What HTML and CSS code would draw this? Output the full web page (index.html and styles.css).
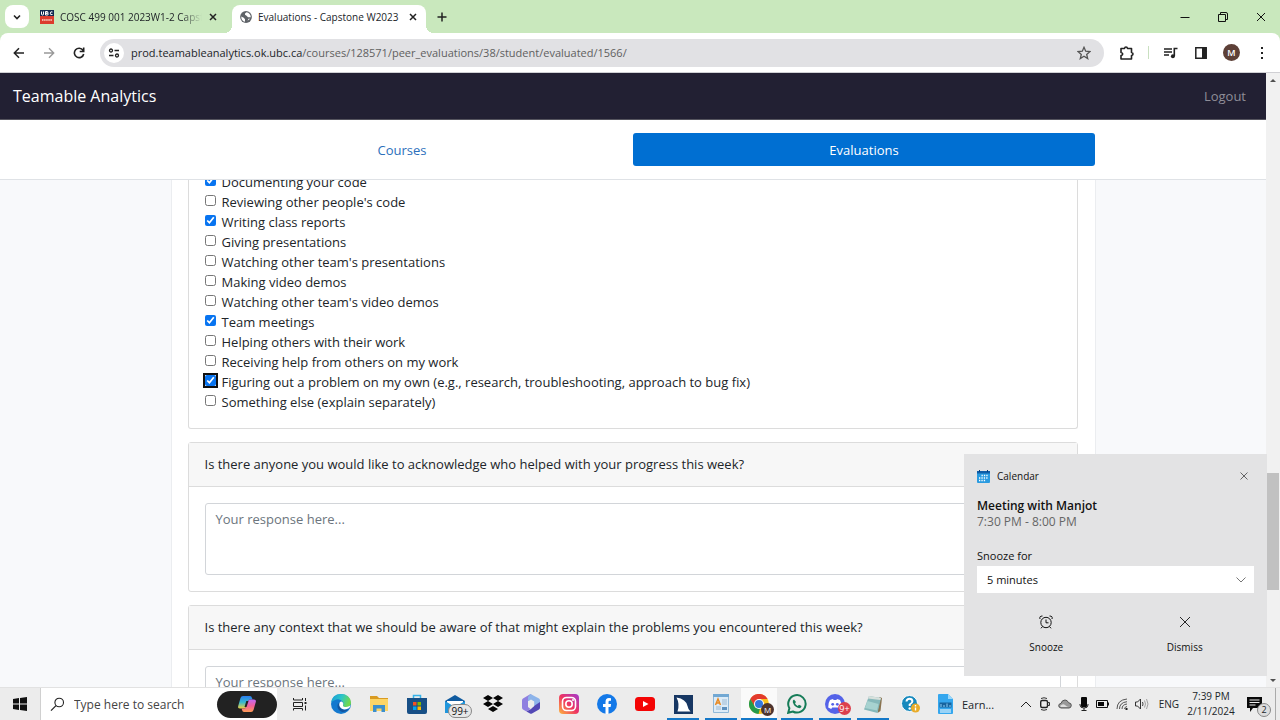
FILE: index.html
```html
<!DOCTYPE html>
<html lang="en">
<head>
<meta charset="utf-8">
<title>Evaluations - Capstone W2023</title>
<link rel="stylesheet" href="styles.css">
</head>
<body>
<div class="tabstrip">
  <button class="tab-search" aria-label="Search tabs"><svg width="10" height="10" viewBox="0 0 10 10"><path d="M2 3.5l3 3 3-3" fill="none" stroke="#222" stroke-width="1.6"/></svg></button>
  <div class="tab">
    <svg width="14" height="14" viewBox="0 0 14 14"><path d="M0 0h14v7H0z" fill="#10284f"/><path d="M0 6h14v8H0z" fill="#dc3b2d"/><path d="M1.5 1.500v2.500q0 1 1 1t1-1V1.500M5.500 5V1.500h1.500q1 0 1 .8t-1 .9H5.500h1.700q1.200 0 1.200.9T7 5zM12.500 2q-2-1-2.200 1.200T12.500 4.500" fill="none" stroke="#fff"/><path d="M2 10h10" stroke="#f2b0a5" stroke-width="2" stroke-dasharray="1.500 .6"/></svg>
    <span class="tab-title fade">COSC 499 001 2023W1-2 Capst</span>
    <button class="tab-close" aria-label="Close tab"><svg width="8" height="8" viewBox="0 0 8 8"><path d="M1 1l6 6M7 1L1 7" stroke="#222" stroke-width="1.5"/></svg></button>
  </div>
  <div class="tab active">
    <svg width="12" height="12" viewBox="0 0 12 12"><circle cx="6" cy="6" r="5.900" fill="#5f6368"/><path d="M1.200 5.500l2.600 1.200 1.200 1.600v2.500Q1.300 10 1.200 5.500zM6.500 1.200L5 2.500v1.300l1.500.9 1.500 1.500h2.800Q10.500 2 6.500 1.200zM7.500 9.800l1-2h1.700z" fill="#fff"/></svg>
    <span class="tab-title">Evaluations - Capstone W2023</span>
    <button class="tab-close" aria-label="Close tab"><svg width="8" height="8" viewBox="0 0 8 8"><path d="M1 1l6 6M7 1L1 7" stroke="#222" stroke-width="1.5"/></svg></button>
  </div>
  <button class="new-tab" aria-label="New tab"><svg width="10" height="10" viewBox="0 0 10 10"><path d="M5 .5v9M.5 5h9" stroke="#222" stroke-width="1.5"/></svg></button>
  <div class="window-buttons">
    <button aria-label="Minimize"><svg width="10" height="10" viewBox="0 0 10 10"><path d="M.5 5.500h9" stroke="#111"/></svg></button>
    <button aria-label="Restore"><svg width="10" height="10" viewBox="0 0 10 10"><path d="M.5 2.500h7v7h-7zM2.500 2V.5h5.500q1.500 0 1.500 1.500v5.500H8" fill="none" stroke="#111"/></svg></button>
    <button aria-label="Close"><svg width="10" height="10" viewBox="0 0 10 10"><path d="M1 1l8 8M9 1L1 9" stroke="#111"/></svg></button>
  </div>
</div>
<div class="toolbar">
  <button class="tool" aria-label="Back"><svg width="12" height="12" viewBox="0 0 12 12"><path d="M11 6H1.500M6 1.200L1.300 6 6 10.800" fill="none" stroke="#222" stroke-width="1.5"/></svg></button>
  <button class="tool" aria-label="Forward"><svg width="12" height="12" viewBox="0 0 12 12"><path d="M1 6h9.500M6 1.200L10.700 6 6 10.800" fill="none" stroke="#999" stroke-width="1.4"/></svg></button>
  <button class="tool" aria-label="Reload"><svg width="12" height="12" viewBox="0 0 12 12"><path d="M10 3.300A4.700 4.700 0 1 0 10.700 7M10.700.5v4h-4" fill="none" stroke="#222" stroke-width="1.600"/></svg></button>
  <div class="omnibox">
    <button class="site-info" aria-label="Site information"><svg width="12" height="10" viewBox="0 0 12 10"><path d="M6.500 2.500H11M1 7.500h4.500" stroke="#222" stroke-width="1.4"/><circle cx="3" cy="2.500" r="1.500" fill="none" stroke="#222" stroke-width="1.300"/><circle cx="9" cy="7.500" r="1.500" fill="none" stroke="#222" stroke-width="1.300"/></svg></button>
    <div class="url">prod.teamableanalytics.ok.ubc.ca<span>/courses/128571/peer_evaluations/38/student/evaluated/1566/</span></div>
    <button class="star" aria-label="Bookmark"><svg width="14" height="14" viewBox="0 0 14 14"><path d="M7 1.300l1.700 3.900 4.200.4-3.200 2.800 1 4.200L7 10.300l-3.700 2.300 1-4.200L1.100 5.600l4.200-.4z" fill="none" stroke="#555" stroke-width="1.300"/></svg></button>
  </div>
  <button class="tool ext" aria-label="Extensions"><svg width="14" height="14" viewBox="0 0 14 14"><path d="M1 2.500h3.500q.2-1.500 1.500-1.500t1.500 1.500h4v4q1.500.2 1.500 1.500t-1.500 1.500v3.500H1V9.500q1.700-.2 1.700-1.500T1 6.500z" fill="none" stroke="#222" stroke-width="1.600" stroke-linejoin="round"/></svg></button>
  <span class="divider"></span>
  <button class="tool" aria-label="Media"><svg width="14" height="12" viewBox="0 0 14 12"><path d="M0 2h8M0 5h8M0 8h5" stroke="#222" stroke-width="1.500"/><path d="M10.300 9V1.500h3.200" fill="none" stroke="#222" stroke-width="1.600"/><circle cx="8.900" cy="9.200" r="2" fill="#222"/></svg></button>
  <button class="tool" aria-label="Side panel"><svg width="12" height="12" viewBox="0 0 12 12"><path d="M.8.800h10.400v10.400H.8z" fill="none" stroke="#222" stroke-width="1.500"/><path d="M7 1h4.500v10H7z" fill="#222"/></svg></button>
  <button class="avatar" aria-label="Profile">M</button>
  <button class="kebab" aria-label="Menu"><svg width="4" height="12" viewBox="0 0 4 12"><path d="M1 0h2v2H1zM1 5h2v2H1zM1 10h2v2H1z" fill="#222"/></svg></button>
</div>

<div class="viewport">
  <div class="page">
    <header class="navbar"><a href="#" class="brand">Teamable Analytics</a><a href="#" class="logout">Logout</a></header>
    <div class="subnav"><nav class="pills"><a href="#">Courses</a><a href="#" class="current">Evaluations</a></nav></div>
    <main class="scroll">
      <form class="panel">
        <section class="card options">
          <label><input type="checkbox" checked><span>Documenting your code</span></label>
          <label><input type="checkbox"><span>Reviewing other people's code</span></label>
          <label><input type="checkbox" checked><span>Writing class reports</span></label>
          <label><input type="checkbox"><span>Giving presentations</span></label>
          <label><input type="checkbox"><span>Watching other team's presentations</span></label>
          <label><input type="checkbox"><span>Making video demos</span></label>
          <label><input type="checkbox"><span>Watching other team's video demos</span></label>
          <label><input type="checkbox" checked><span>Team meetings</span></label>
          <label><input type="checkbox"><span>Helping others with their work</span></label>
          <label><input type="checkbox"><span>Receiving help from others on my work</span></label>
          <label><input type="checkbox" checked class="focused"><span>Figuring out a problem on my own (e.g., research, troubleshooting, approach to bug fix)</span></label>
          <label><input type="checkbox"><span>Something else (explain separately)</span></label>
        </section>
        <section class="card">
          <label class="question" for="q1">Is there anyone you would like to acknowledge who helped with your progress this week?</label>
          <div class="answer"><textarea id="q1" placeholder="Your response here..."></textarea></div>
        </section>
        <section class="card">
          <label class="question" for="q2">Is there any context that we should be aware of that might explain the problems you encountered this week?</label>
          <div class="answer"><textarea id="q2" placeholder="Your response here..."></textarea></div>
        </section>
      </form>
    </main>
  </div>
  <div class="scrollbar">
    <svg width="8" height="5" viewBox="0 0 8 5"><path d="M1 4l3-3 3 3z" fill="#505050"/></svg>
    <div class="track"><div class="thumb"></div></div>
    <svg width="8" height="5" viewBox="0 0 8 5"><path d="M1 1l3 3 3-3z" fill="#505050"/></svg>
  </div>
  <aside class="toast">
    <div class="toast-head">
      <svg width="13" height="13" viewBox="0 0 13 13"><rect y="1" width="13" height="12" rx="1" fill="#2a9be0"/><path d="M0 1h13v2.500H0z" fill="#0f5ea8"/><path d="M2.500 0v2M10.500 0v2" stroke="#0a3f78"/><path d="M4.500 5.500h7M2 8h9.500M2 10.500h7" stroke="#fff" stroke-width="1.300" stroke-dasharray="1.300 1.100"/></svg>
      <span>Calendar</span>
      <button aria-label="Close"><svg width="8" height="8" viewBox="0 0 8 8"><path d="M.5.500l7 7M7.500.500l-7 7" stroke="#555" stroke-width=".9"/></svg></button>
    </div>
    <h2>Meeting with Manjot</h2>
    <p>7:30 PM - 8:00 PM</p>
    <label for="snooze">Snooze for</label>
    <div class="select-wrap">
      <select id="snooze"><option>5 minutes</option></select>
      <svg width="10" height="6" viewBox="0 0 10 6"><path d="M.5.500L5 5 9.500.500" fill="none" stroke="#666" stroke-width=".9"/></svg>
    </div>
    <div class="actions">
      <button><svg width="14" height="14" viewBox="0 0 14 14"><circle cx="7" cy="7.500" r="5.200" fill="none" stroke="#111"/><path d="M7 4.500v3.300h2.500M1 4Q0 1 3.500 1M13 4q1-3-2.500-3M3.500 11.500L2 13.300M10.500 11.500l1.500 1.800" fill="none" stroke="#111"/></svg><span>Snooze</span></button>
      <button><svg width="14" height="14" viewBox="0 0 14 14"><path d="M2 2l10 10M12 2L2 12" stroke="#111" stroke-width=".9"/></svg><span>Dismiss</span></button>
    </div>
  </aside>
</div>

<footer class="taskbar">
  <button class="start" aria-label="Start"><svg width="14" height="14" viewBox="0 0 14 14"><path d="M0 2l6-.9v5.500H0zM7 .9L14 0v6.600H7zM0 7.400h6v5.500L0 12zM7 7.400h7V14l-7-.9z" fill="#111"/></svg></button>
  <div class="search">
    <svg width="15" height="15" viewBox="0 0 15 15"><circle cx="9.200" cy="5.500" r="4.300" fill="none" stroke="#222" stroke-width="1.100"/><path d="M6 8.700L1 13.700" stroke="#222" stroke-width="1.200"/></svg>
    <input type="text" aria-label="Search" placeholder="Type here to search">
    <button class="copilot" aria-label="Copilot"><svg width="20" height="18" viewBox="0 0 20 18"><defs><linearGradient id="ca" x2="0" y2="1"><stop stop-color="#2b7df0"/><stop offset=".5" stop-color="#35b8d0"/><stop offset="1" stop-color="#f3d13c"/></linearGradient><linearGradient id="cb" x2="0" y2="1"><stop stop-color="#c06af5"/><stop offset=".5" stop-color="#f25f9c"/><stop offset="1" stop-color="#ff9d55"/></linearGradient></defs><path d="M6 1h7q1.500 0 2 2l.5 1.500h-2.500q-1.500 0-2 1.500l-2 6q-.5 1.500-2 1.500H3q-2.500 0-1.800-2.500L3.500 3Q4 1 6 1z" fill="url(#ca)"/><path d="M14 17H7q-1.500 0-2-2l-.3-1.500H7q1.500 0 2-1.500l2-6q.5-1.500 2-1.500h4q2.500 0 1.800 2.500l-2.300 8q-.5 2-2.500 2z" fill="url(#cb)"/><path d="M9.300 6h2.200l-2 6H7.500z" fill="#222"/></svg></button>
  </div>
  <div class="apps">
    <button class="task-view" aria-label="Task view"><svg width="14" height="14" viewBox="0 0 14 14"><path d="M.5 1v2h9V1M.5 5.500h9v4h-9zM.5 13.500v-2h9v2M12.500 1v3M12.500 8.500v5" fill="none" stroke="#222"/><path d="M11.500 5h2v2h-2z" fill="#222"/></svg></button>
    <button aria-label="Edge"><svg width="20" height="20" viewBox="0 0 20 20"><defs><linearGradient id="ea" x2="1" y2=".3"><stop stop-color="#1798d8"/><stop offset=".55" stop-color="#2cc5c8"/><stop offset="1" stop-color="#6fd94f"/></linearGradient></defs><circle cx="10" cy="10" r="10" fill="#1479cf"/><path d="M0 9Q1 0 10 0q9 0 10 8.500 0 4.500-5 4.500-3.500 0-3-1.800 1.200-1.500 0-3.200Q9 4 4 6 1 7 0 9z" fill="url(#ea)"/><path d="M7 9.500q-2 5 3 8 4 2 8-2.500-2.500 1.300-5.500.5Q8 14 8.500 9.500z" fill="#1456a0"/><path d="M8.700 8.500q-1.500 3.500 1.800 6 3.500 2 7.700-.5l1.300-2.500q-3 2-6.500 1.200-1.500-.7-1-1.500 1-1.500-.5-3.200-1.500-1.200-2.800.5z" fill="#fff"/></svg></button>
    <button aria-label="File Explorer"><svg width="20" height="18" viewBox="0 0 20 18"><path d="M1 1h7l2 2h9v4H1z" fill="#d99b22"/><path d="M1 4h18v12H1z" fill="#fcd566"/><path d="M4 17v-7h12v7h-3.500v-3.500h-5V17z" fill="#3c8fcc"/></svg></button>
    <button aria-label="Store"><svg width="20" height="20" viewBox="0 0 20 20"><path d="M6.500 5V1.500h7V5" fill="none" stroke="#36b3ea" stroke-width="1.500"/><path d="M0 4h20v14q0 2-2 2H2q-2 0-2-2z" fill="#174f86"/><path d="M6 8h3.500v3.500H6z" fill="#f25022"/><path d="M10.500 8H14v3.500h-3.500z" fill="#7fba00"/><path d="M6 12.500h3.500V16H6z" fill="#00a4ef"/><path d="M10.500 12.500H14V16h-3.500z" fill="#ffb900"/></svg></button>
    <button class="badged" aria-label="Mail"><svg width="20" height="18" viewBox="0 0 20 18"><path d="M0 6l10-6 10 6v12H0z" fill="#0f5a9f"/><path d="M2 6h16v7H2z" fill="#fff"/><path d="M0 6l10 6 10-6v12H0z" fill="#2196dc"/></svg><span class="badge count">99+</span></button>
    <button aria-label="Dropbox"><svg width="20" height="18" viewBox="0 0 20 18"><path d="M5 0l5 3-5 3-5-3zM15 0l5 3-5 3-5-3zM5 6l5 3-5 3-5-3zM15 6l5 3-5 3-5-3zM10 11l5 3-5 3-5-3z" fill="#050505"/></svg></button>
    <button aria-label="Microsoft 365"><svg width="18" height="20" viewBox="0 0 18 20"><path d="M8.500 0L1 4.500Q0 5 0 6.500v7Q0 15 1 15.500l3.500 2 4-2.500-2.500-2V7l6-4z" fill="#8f7fe0"/><path d="M8.500 0l8.500 4.500q1 .5 1 2v7l-6 1.500V7.500L6 7V3z" fill="#8db4ea"/><path d="M4.500 17.500L8 19.500q1 .5 2 0l7-4q1-.5 1-2V8l-6 4-3 3z" fill="#5348b5"/><path d="M6 7.500l3-2 3.200 2v4.500L9 14l-3-2z" fill="#ececec"/></svg></button>
    <button aria-label="Instagram"><svg width="20" height="20" viewBox="0 0 20 20"><defs><linearGradient id="ig" x1="0" y1="1" x2="1" y2="0"><stop stop-color="#fdb73e"/><stop offset=".5" stop-color="#ee3363"/><stop offset="1" stop-color="#a13bd0"/></linearGradient></defs><rect width="20" height="20" rx="4" fill="url(#ig)"/><rect x="3.500" y="3.500" width="13" height="13" rx="4" fill="none" stroke="#fff" stroke-width="1.600"/><circle cx="10" cy="10" r="3.200" fill="none" stroke="#fff" stroke-width="1.600"/><circle cx="14" cy="6" r="1" fill="#fff"/></svg></button>
    <button aria-label="Facebook"><svg width="20" height="20" viewBox="0 0 20 20"><circle cx="10" cy="10" r="10" fill="#1479e8"/><path d="M8.500 20v-7H6v-3h2.500V8q0-4 3.500-4l2 .2v2.600h-1.200Q11.500 6.800 11.500 8v2h2.600l-.5 3h-2.100v7z" fill="#fff"/></svg></button>
    <button aria-label="YouTube"><svg width="20" height="14" viewBox="0 0 20 14"><rect width="20" height="14" rx="3.500" fill="#f40505"/><path d="M8 4l5.500 3L8 10z" fill="#fff"/></svg></button>
    <button class="open" aria-label="Wireshark"><svg width="19" height="19" viewBox="0 0 19 19"><path d="M0 0h19v19H0z" fill="#173763"/><path d="M2.500 2.500Q12 4 13.500 11q.8 4 3 5.500h-13Q6 9 2.500 2.500z" fill="#fff"/></svg></button>
    <button class="open" aria-label="WordPad"><svg width="16" height="20" viewBox="0 0 16 20"><path d="M.5.500h15v18H.5z" fill="#dcebf7" stroke="#8fb8d8"/><path d="M0 0h16v3H0z" fill="#72a8d3"/><path d="M2.500 11L5 5l2.500 6M3.500 9h3" fill="none" stroke="#e88921" stroke-width="1.500"/><path d="M9 6h5M9 8h5M9 10h5M3 13h5M3 15h5" stroke="#9db9d2"/><path d="M9 13h5v3H9z" fill="#5d90be"/></svg></button>
    <button class="open active badged" aria-label="Chrome"><svg width="20" height="20" viewBox="0 0 20 20"><circle cx="10" cy="10" r="10" fill="#fbc11b"/><path d="M1.300 5A10 10 0 0 1 18.700 5H10l-4.500 7.500z" fill="#e33b2e"/><path d="M1.300 5l4.500 7.500 5.200 2L9.500 20A10 10 0 0 1 1.300 5z" fill="#259b4b"/><circle cx="10" cy="10" r="5" fill="#fff"/><circle cx="10" cy="10" r="4" fill="#3477de"/></svg><span class="badge profile">M</span></button>
    <button class="open" aria-label="WhatsApp"><svg width="20" height="20" viewBox="0 0 20 20"><path d="M1.200 18.800l1.200-4.600A8.700 8.700 0 1 1 5.800 17.500z" fill="none" stroke="#167c58" stroke-width="2"/><path d="M7 5.500q-1.500.7-1.200 2.700 1.500 5 6.700 6 2-.2 2-2.200l-2.500-1.300-1.300 1.300Q8.500 11 8 9.200l1-1.200z" fill="#167c58"/></svg></button>
    <button class="open badged" aria-label="Discord"><svg width="20" height="20" viewBox="0 0 20 20"><circle cx="10" cy="10" r="10" fill="#5563e8"/><path d="M5 6l3-1 .6.900h2.800L12 5l3 1q2.300 4 1.800 7.500l-3 1.500-1-1.500H7.200l-1 1.500-3-1.500Q3 9 5 6z" fill="#fff"/><circle cx="7.700" cy="10.300" r="1.400" fill="#5563e8"/><circle cx="12.300" cy="10.300" r="1.400" fill="#5563e8"/></svg><span class="badge alert">9+</span></button>
    <button class="open" aria-label="Notepad"><svg width="20" height="18" viewBox="0 0 20 18"><path d="M16.500 2l2.500 1-1.500 13-3 2z" fill="#8a7350"/><path d="M6 1l12 2-3.500 15L1 14.500z" fill="#86b8ba"/><path d="M6 1l12 2-.7 2L5 3.500z" fill="#d8e0dc"/><path d="M4.500 6l11 3-1.500 6.500L2 13z" fill="#a7d2d0"/></svg></button>
    <button aria-label="Help"><svg width="20" height="18" viewBox="0 0 20 18"><circle cx="8.500" cy="8.500" r="8" fill="#1789bd" stroke="#fff"/><path d="M5.500 6.500Q5.800 3.700 8.500 3.700t2.900 2.500Q11.400 8 8.700 9.500V11" fill="none" stroke="#fff" stroke-width="2"/><circle cx="8.700" cy="13.500" r="1.200" fill="#fff"/><circle cx="14.500" cy="13" r="4.500" fill="#e9ac29"/><path d="M14.500 10v1.500M14.500 12.500v3" stroke="#fff" stroke-width="1.400"/></svg></button>
  </div>
  <button class="news"><svg width="15" height="20" viewBox="0 0 15 20"><path d="M0 1q0-1 1-1h9l5 5v14q0 1-1 1H1q-1 0-1-1z" fill="#35a7ee"/><path d="M10 0v5h5z" fill="#9bd7fa"/><path d="M1.500 8.500h12v5h-12z" fill="#17639e"/><path d="M3 13v-3M6 13v-2M9 13V9.500M12 13v-2" stroke="#8ed2f8"/><path d="M2 16h11M2 18h11" stroke="#fff"/></svg><span>Earn...</span></button>
  <div class="tray">
    <svg width="12" height="8" viewBox="0 0 12 8"><path d="M1 7l5-5 5 5" fill="none" stroke="#222"/></svg>
    <svg width="12" height="14" viewBox="0 0 12 14"><rect x="1.700" y="3.500" width="6.800" height="7" rx="1.500" fill="none" stroke="#222" stroke-width="1.400"/><path d="M2 1.500Q5 0 8 1.500M2 12.500q3 1.500 6 0M8.500 5.500h2v3h-2" fill="none" stroke="#333"/></svg>
    <svg width="14" height="10" viewBox="0 0 14 10"><path d="M3 9Q.5 8.500.7 6.500 1 4.500 3 4.400 4 1 7 1q2.500 0 3.500 2.700Q13.500 4 13.300 6.500 13 9 11 9z" fill="#999" stroke="#555"/><path d="M2 7q3-3 5-1t4 2H3z" fill="#ddd"/></svg>
    <svg width="10" height="14" viewBox="0 0 10 14"><rect x="2" width="6" height="10" rx="1" fill="#080808"/><path d="M1 7v1q0 3 4 3t4-3V7M5 11v2.500M2.500 13.500h5" fill="none" stroke="#222"/></svg>
    <svg width="13" height="8" viewBox="0 0 13 8"><path d="M.5.500h11v7H.5z" fill="none" stroke="#111"/><path d="M2 2h6v4H2z" fill="#080808"/><path d="M12.500 2.500v3" stroke="#111"/></svg>
    <svg width="12" height="12" viewBox="0 0 12 12"><path d="M1 11Q1 2 11 1M3.500 11Q3.500 4.500 11 3.700M6 11q0-4.500 5-5M8.500 11q0-2 2.500-2.500" fill="none" stroke="#555"/><path d="M9.500 10h2v2h-2z" fill="#222"/></svg>
    <svg width="14" height="12" viewBox="0 0 14 12"><path d="M.5 4v4h2l3 3V1l-3 3z" fill="none" stroke="#333"/><path d="M7.500 4q1 2 0 4" fill="none" stroke="#444"/><path d="M9.500 2.500q2 3.500 0 7M11.500 1q3 5 0 10" fill="none" stroke="#999" stroke-width=".9"/></svg>
    <span class="lang">ENG</span>
    <div class="clock"><span>7:39 PM</span><span>2/11/2024</span></div>
    <button class="notices badged" aria-label="Notifications"><svg width="15" height="15" viewBox="0 0 15 15"><path d="M0 0h15v11H6l-3 4v-4H0z" fill="#090909"/><path d="M2.500 3h10M2.500 5.500h10M2.500 8h6" stroke="#ececec"/></svg><span class="badge number">2</span></button>
  </div>
</footer>
</body>
</html>
```
FILE: styles.css
```css
* { box-sizing: border-box; }
body {
  margin: 0;
  height: 100vh;
  display: flex;
  flex-direction: column;
  overflow: hidden;
  background: #c9e8bd;
  color: #212529;
  font-family: "Open Sans", "Noto Sans", sans-serif;
  font-size: 13px;
}
button { border: 0; padding: 0; background: none; font: inherit; color: inherit; display: flex; align-items: center; justify-content: center; flex: none; }
a { text-decoration: none; color: inherit; }
svg { display: block; flex: none; }

.tabstrip { height: 33px; flex: none; display: flex; align-items: center; padding-left: 5px; background: #c9e8bd; font-size: 10px; }
.tab-search { width: 24px; height: 23px; border-radius: 8px; background: #fff; }
.tab { width: 199px; height: 28px; align-self: flex-end; display: flex; align-items: center; gap: 6px; padding: 0 10px 4px 11px; }
.tab.active { background: #fff; border-radius: 8px 8px 0 0; padding: 0 8px 4px; width: 194px; margin-left: 4px; position: relative; }
.tab.active::before, .tab.active::after { content: ""; position: absolute; bottom: 0; width: 8px; height: 8px; }
.tab.active::before { left: -8px; background: radial-gradient(circle at 0 0, transparent 8px, #fff 8px); }
.tab.active::after { right: -8px; background: radial-gradient(circle at 100% 0, transparent 8px, #fff 8px); }
.tab-title { flex: 1; min-width: 0; white-space: nowrap; }
.tab-title.fade { mask-image: linear-gradient(90deg, #000 85%, transparent); }
.tab-close { width: 10px; height: 20px; }
.new-tab { width: 30px; height: 24px; margin-left: 1px; }
.window-buttons { margin-left: auto; display: flex; }
.window-buttons button { width: 38px; height: 30px; }

.toolbar { height: 40px; flex: none; display: flex; align-items: center; padding: 0 10px 0 4px; background: #fff; border-bottom: 1px solid #d0d0d4; border-radius: 8px 8px 0 0; }
.tool { width: 30px; height: 28px; }
.omnibox { flex: 1; height: 28px; margin-left: 6px; display: flex; align-items: center; gap: 7px; padding: 0 13px 0 4px; border-radius: 14px; background: #e1e1e4; white-space: nowrap; overflow: hidden; }
.site-info { width: 20px; height: 20px; border-radius: 50%; background: #fff; }
.url { flex: 1; font-size: 11px; }
.url span { color: #606060; }
.ext { margin-left: 8px; }
.divider { width: 1px; height: 13px; margin: 0 7px 0 6px; background: #c9e0c0; }
.avatar { width: 17px; height: 17px; margin: 0 7px; border-radius: 50%; background: #5d4037; color: #fff; font-size: 9px; font-weight: 600; }
.kebab { width: 16px; height: 24px; margin-left: 7px; }

.viewport { flex: 1; min-height: 0; display: flex; position: relative; background: #f8f9fb; }
.page { flex: 1; min-width: 0; display: flex; flex-direction: column; }
.navbar { height: 47px; flex: none; display: flex; justify-content: space-between; align-items: center; padding: 0 20px 0 13px; background: #222033; border-bottom: 1px solid #55545e; }
.brand { color: #fff; font-size: 16px; }
.logout { color: #8f8e98; }
.subnav { height: 60px; flex: none; display: flex; justify-content: center; align-items: center; background: #fff; border-bottom: 1px solid #dfe2e6; }
.pills { width: 924px; display: flex; }
.pills a { flex: 1; height: 33px; display: flex; align-items: center; justify-content: center; border-radius: 3px; color: #2c6fbb; }
.pills .current { background: #006fd2; color: #fff; }
.scroll { flex: 1; min-height: 0; overflow: hidden; display: flex; justify-content: center; align-items: flex-start; }
.panel { width: 925px; display: flex; flex-direction: column; gap: 13px; margin-top: -8px; padding: 0 17px 16px 16px; background: #fff; border: solid #ebedf0; border-width: 0 1px; }
.card { border: 1px solid #dcdcdc; border-radius: 3px; background: #fff; }
.options { border-top: 0; padding: 0 16px 16px; }
.options label { display: flex; height: 20px; line-height: 20px; gap: 6px; }
.options input { width: 11px; height: 11px; margin: 3px 0 0; flex: none; accent-color: #0874f0; }
.options .focused { outline: 2px solid #101010; outline-offset: 0; border-radius: 1px; }
.question { display: flex; align-items: center; height: 44px; padding: 0 16px 2px; background: #f7f7f7; border-bottom: 1px solid #dcdcdc; }
.answer { padding: 16px; }
textarea { display: block; width: 100%; height: 72px; resize: none; padding: 5px 10px; border: 1px solid #d2d5d9; border-radius: 3px; background: #fff; font: inherit; line-height: 20px; }
textarea::placeholder { color: #6c757d; }
.scrollbar { width: 14px; flex: none; display: flex; flex-direction: column; align-items: center; padding: 5px 0 4px; background: #f1f1f1; }
.track { flex: 1; align-self: stretch; display: flex; flex-direction: column; padding: 0 1px; }
.thumb { height: 117px; margin-top: auto; margin-bottom: 88px; background: #c1c1c1; }

.toast { position: absolute; right: 13px; bottom: 11px; width: 303px; height: 222px; padding: 12px 13px; display: flex; flex-direction: column; background: #e3e3e4; color: #111; font-size: 12px; line-height: 16px; }
.toast-head { display: flex; align-items: center; gap: 7px; height: 20px; font-size: 10px; }
.toast-head button { margin-left: auto; width: 20px; height: 20px; }
.toast h2 { margin: 11px 0 0; font-size: 12px; font-weight: 600; line-height: 17px; }
.toast p { margin: 0 0 18px; color: #666; }
.toast label { font-size: 11px; }
.select-wrap { position: relative; margin-top: 2px; }
.select-wrap select { display: block; width: 100%; height: 27px; padding: 0 10px; appearance: none; border: 0; border-radius: 0; background: #fff; color: #111; font: inherit; font-size: 11px; }
.select-wrap svg { position: absolute; right: 8px; top: 11px; }
.actions { display: flex; padding-top: 22px; }
.actions button { flex: 1; flex-direction: column; gap: 10px; font-size: 10px; }

.taskbar { height: 33px; flex: none; display: flex; align-items: stretch; background: #ececec; border-top: 1px solid #e2e2e2; }
.start { width: 40px; }
.search { width: 237px; flex: none; display: flex; align-items: center; gap: 9px; padding-left: 9px; background: #fff; border-left: 1px solid #d0d0d0; }
.search input { flex: 1; min-width: 0; border: 0; padding: 0; background: none; font: inherit; font-size: 12px; }
.search input::placeholder { color: #444; }
.copilot { width: 60px; height: 27px; border-radius: 14px; background: #222; }
.apps { display: flex; flex: none; }
.apps button { width: 38px; border: solid transparent; border-width: 0 3px; background-clip: padding-box; }
.apps .task-view { width: 45px; }
.apps .open { background-image: linear-gradient(#1478c8, #1478c8); background-size: 100% 2px; background-position: bottom; background-repeat: no-repeat; }
.apps .active { background-color: #fafafa; border-width: 0 1px; }
.badged { position: relative; }
.badge { position: absolute; display: flex; align-items: center; justify-content: center; border-radius: 8px; line-height: 12px; }
.count { right: -1px; bottom: 2px; width: 24px; height: 14px; border: 1px solid #888; background: #e6e6e6; color: #111; font-size: 10px; }
.profile { right: 3px; bottom: 4px; width: 13px; height: 13px; background: #4e342e; color: #fff; font-size: 8px; }
.alert { right: 0; bottom: 5px; width: 13px; height: 13px; background: #dc3f4d; color: #fff; font-size: 9px; }
.news { gap: 9px; margin-left: 8px; font-size: 11px; }
.tray { margin-left: auto; display: flex; align-items: center; gap: 7px; padding-right: 4px; border-right: 1px solid #aaa; margin-right: 4px; font-size: 10px; }
.lang { margin-left: 3px; }
.clock { width: 48px; margin-left: 1px; display: flex; flex-direction: column; align-items: center; line-height: 15px; font-size: 10px; }
.notices { width: 26px; height: 30px; margin-left: 3px; }
.notices svg { margin-right: 8px; }
.number { right: 0; bottom: 2px; width: 14px; height: 14px; border: 1px solid #888; background: #ddd; font-size: 9px; }
```
